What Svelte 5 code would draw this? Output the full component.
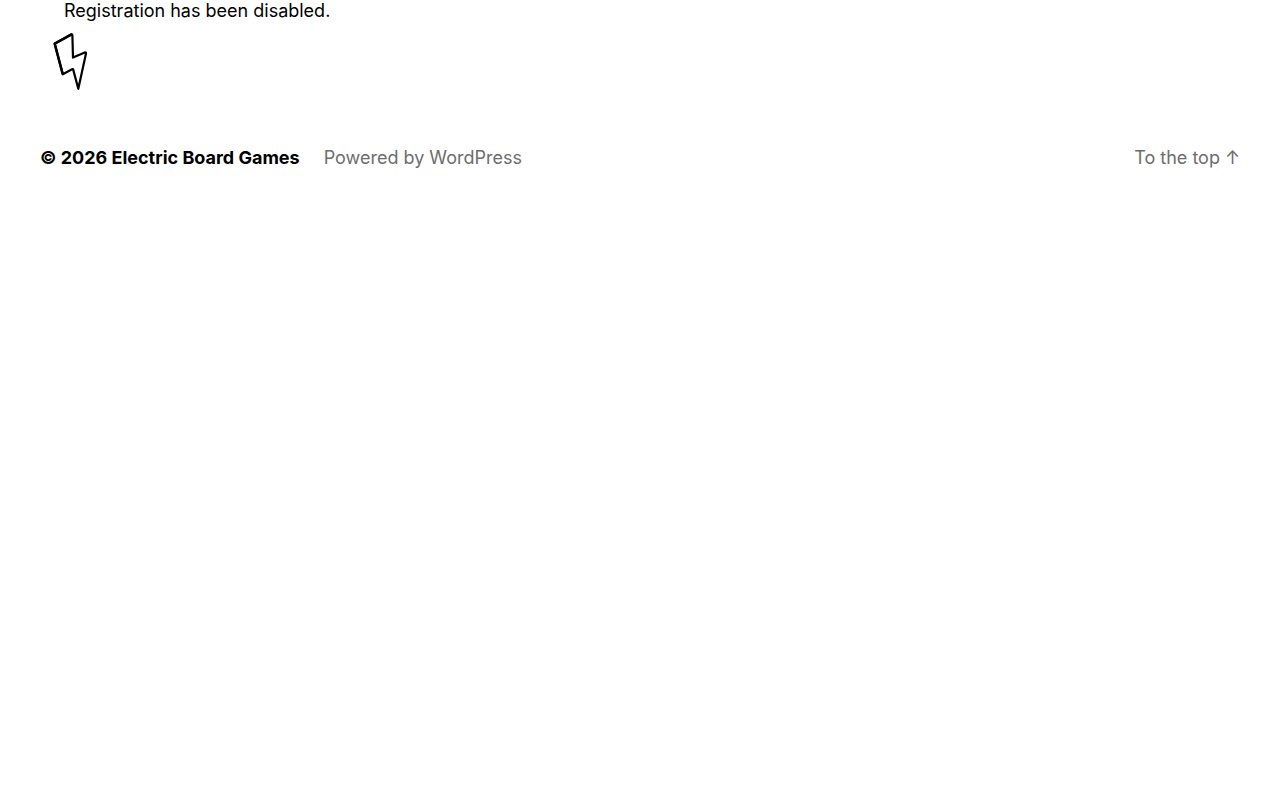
<script>
  const site = 'Electric Board Games';
  const year = 2026;
</script>

<style>
  :global(body) {
    margin: 0;
    background: #fff;
    color: #000;
    font-family: Inter, "Liberation Sans", sans-serif;
    font-size: 18px;
    line-height: 22px;
  }

  a {
    color: inherit;
    text-decoration: none;
  }

  a:hover {
    text-decoration: underline;
  }

  p {
    margin: 0;
  }

  .notice {
    padding: 0 64px;
  }

  .logo {
    display: inline-block;
    margin: 8px 40px 0;
  }

  .logo svg {
    display: block;
    width: 60px;
    height: 64px;
  }

  footer {
    display: flex;
    justify-content: space-between;
    padding: 48px 40px;
  }

  .credits {
    display: flex;
    gap: 24px;
  }

  .copyright {
    font-weight: 700;
  }

  .powered,
  .to-top {
    color: #6d6d6d;
  }
</style>

<main>
  <p class="notice">Registration has been disabled.</p>
  <a class="logo" href="/" aria-label={site}>
    <svg viewBox="0 0 60 64" fill="none" stroke="#000" stroke-width="2.2" stroke-linejoin="round" stroke-linecap="round">
      <path d="M14.7 13.7 L31 4.4 Q32.3 4 32.4 5.5 L33 27.6 L44.8 22.4 Q46.2 22.2 46 23.6 L38.3 58.8 L33.2 39.6 Q32.8 38.8 32 39.3 L22.8 44.3 Z" />
      <path stroke-width="2.5" d="M22.6 43.6 L14.7 13.7 L31.3 4.6" />
    </svg>
  </a>
</main>

<footer>
  <div class="credits">
    <p class="copyright">&copy; {year} <a href="/">{site}</a></p>
    <p class="powered"><a href="https://wordpress.org/">Powered by WordPress</a></p>
  </div>
  <a class="to-top" href="#app">To the top <span aria-hidden="true">↑</span></a>
</footer>
